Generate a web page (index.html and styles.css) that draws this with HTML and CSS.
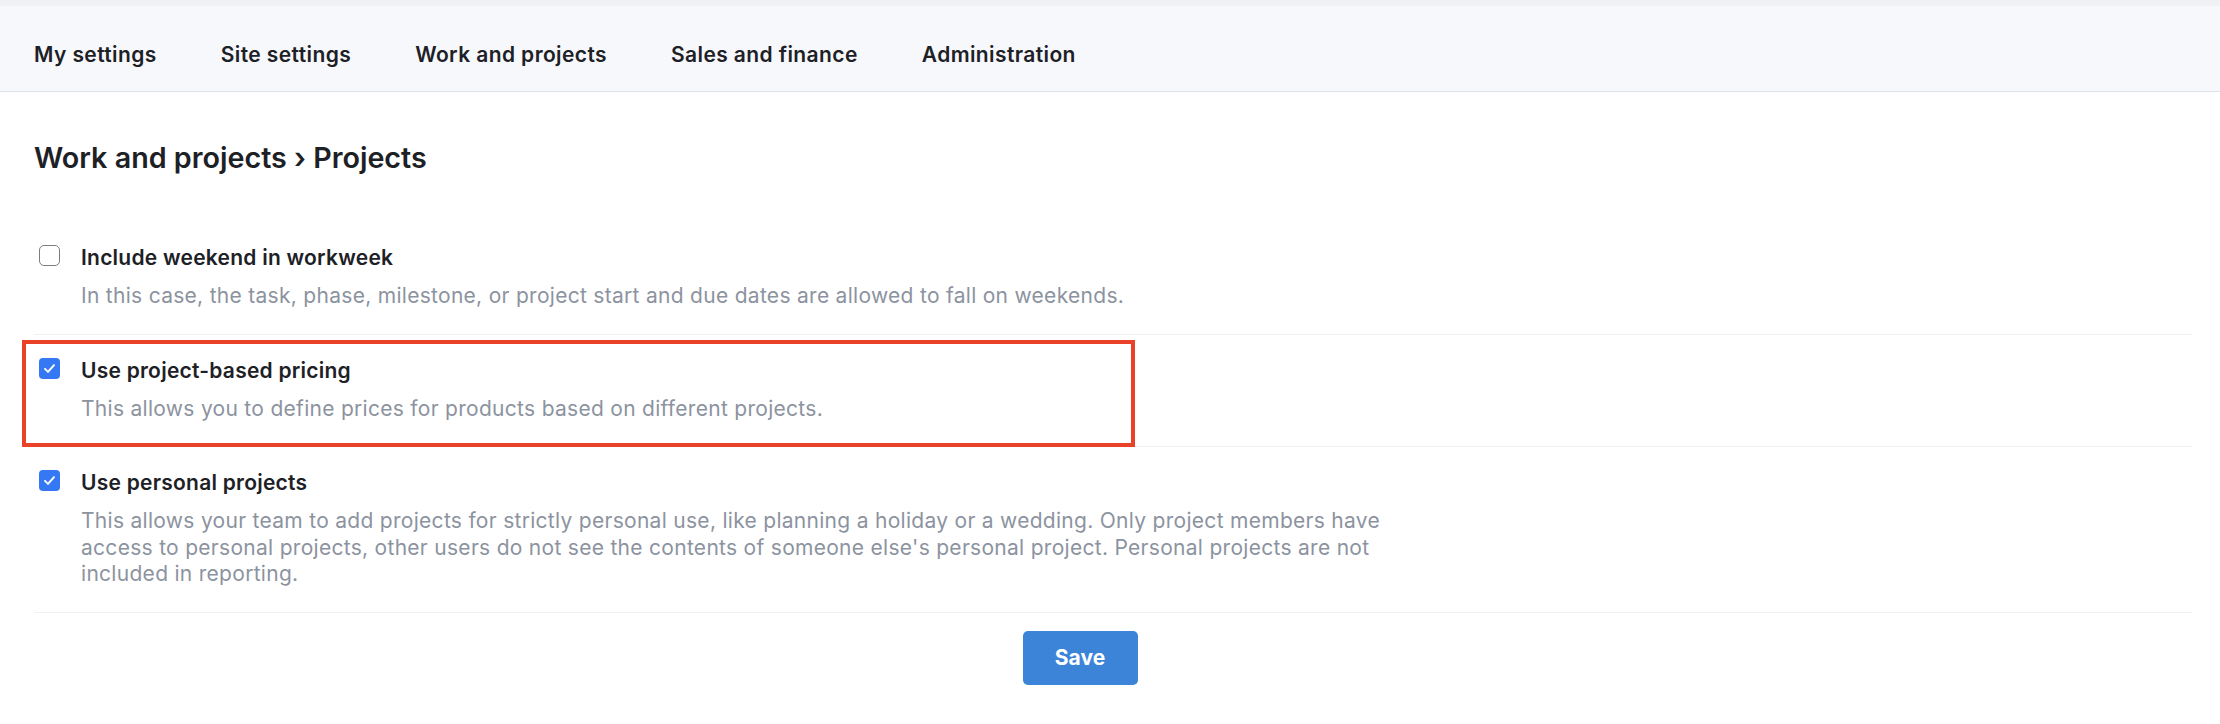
FILE: index.html
```html
<!DOCTYPE html>
<html lang="en">
<head>
    <meta charset="UTF-8">
    <meta name="viewport" content="width=device-width, initial-scale=1.0">
    <title>Settings - Projects</title>
    <link rel="stylesheet" href="styles.css">
</head>
<body>
    <div class="top-strip"></div>
    <nav class="settings-nav">
        <a href="#">My settings</a>
        <a href="#">Site settings</a>
        <a href="#">Work and projects</a>
        <a href="#">Sales and finance</a>
        <a href="#">Administration</a>
    </nav>

    <main class="content">
        <h1>Work and projects › Projects</h1>

        <div class="option">
            <label class="option-label">
                <span class="box"></span>
                <span>Include weekend in workweek</span>
            </label>
            <p class="option-desc">In this case, the task, phase, milestone, or project start and due dates are allowed to fall on weekends.</p>
        </div>

        <div class="option highlighted">
            <label class="option-label">
                <span class="box checked">
                    <svg viewBox="0 0 20 20" width="15" height="15"><path d="M4 10.5l4 4 8-9" fill="none" stroke="#fff" stroke-width="2.6" stroke-linecap="round" stroke-linejoin="round"/></svg>
                </span>
                <span>Use project-based pricing</span>
            </label>
            <p class="option-desc">This allows you to define prices for products based on different projects.</p>
            <div class="mark"></div>
        </div>

        <div class="option">
            <label class="option-label">
                <span class="box checked">
                    <svg viewBox="0 0 20 20" width="15" height="15"><path d="M4 10.5l4 4 8-9" fill="none" stroke="#fff" stroke-width="2.6" stroke-linecap="round" stroke-linejoin="round"/></svg>
                </span>
                <span>Use personal projects</span>
            </label>
            <p class="option-desc">This allows your team to add projects for strictly personal use, like planning a holiday or a wedding. Only project members have access to personal projects, other users do not see the contents of someone else's personal project. Personal projects are not included in reporting.</p>
        </div>

        <div class="actions">
            <button type="submit">Save</button>
        </div>
    </main>
</body>
</html>
```

FILE: styles.css
```css
body {
    margin: 0;
    font-family: Inter, "Noto Sans", sans-serif;
    background: #fff;
    color: #1d2126;
}

.top-strip {
    height: 6px;
    background: #f0f1f5;
}

.settings-nav {
    display: flex;
    gap: 64px;
    height: 86px;
    box-sizing: border-box;
    padding: 37px 34px 0;
    background: #f7f8fc;
    border-bottom: 1px solid #dde3ea;
}

.settings-nav a {
    font-size: 21px;
    line-height: 24px;
    letter-spacing: 0.4px;
    font-weight: 600;
    color: #1d2126;
    text-decoration: none;
}

.content {
    padding: 0 28px 0 34px;
}

h1 {
    font-size: 28.7px;
    line-height: 34px;
    font-weight: 600;
    margin: 49px 0 47px;
}

.option {
    position: relative;
    padding: 23px 0 24px;
    border-bottom: 1px solid #eff0f4;
}

.option-label {
    display: flex;
    align-items: flex-start;
    gap: 21px;
    font-size: 21px;
    line-height: 26px;
    letter-spacing: 0.24px;
    font-weight: 600;
    padding-left: 5px;
}

.box {
    width: 21px;
    height: 21px;
    box-sizing: border-box;
    border: 1.5px solid #7b7d82;
    border-radius: 5px;
    background: #fff;
    display: flex;
    align-items: center;
    justify-content: center;
    flex-shrink: 0;
}

.box.checked {
    border: none;
    border-radius: 4px;
    background: #3478f6;
}

.option-desc {
    margin: 12px 0 0 47px;
    max-width: 1320px;
    font-size: 21px;
    line-height: 26.5px;
    letter-spacing: 0.29px;
    color: #8c93a0;
}

/* red highlight frame around the pricing option */
.mark {
    position: absolute;
    left: -12px;
    top: 5px;
    bottom: -1px;
    width: 1113px;
    box-sizing: border-box;
    border: 4px solid #e94229;
}

.actions {
    display: flex;
    justify-content: center;
    padding: 18px 66px 30px 0;
}

.actions button {
    width: 115px;
    height: 54px;
    border: none;
    border-radius: 5px;
    background: #3b84d8;
    color: #fff;
    font-family: Inter, "Noto Sans", sans-serif;
    font-size: 21px;
    font-weight: 700;
    cursor: pointer;
}
```
